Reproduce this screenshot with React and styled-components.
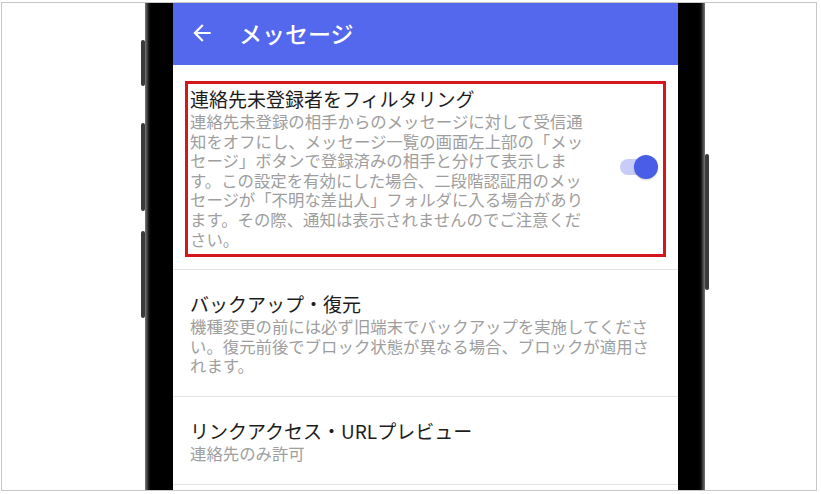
import React from "react";
import styled, { createGlobalStyle } from "styled-components";

const GlobalStyle = createGlobalStyle`
  html, body { margin: 0; padding: 0; background: #ffffff; }
  body { font-family: "Noto Sans CJK JP", "Noto Sans", sans-serif; }
  * { box-sizing: border-box; }
`;

const Page = styled.div`
  width: 821px;
  height: 494px;
  padding: 2px 0 0 1px;
  background: #ffffff;
`;

const Frame = styled.div`
  width: 816px;
  height: 489px;
  border: 1px solid #c8c8c8;
  overflow: hidden;
  display: flex;
  align-items: flex-start;
  padding-left: 143px;
`;

const Phone = styled.div`
  position: relative;
  width: 560px;
  height: 620px;
  padding: 0 27px 0 28px;
  background: linear-gradient(
    to right,
    #7a7a7a 0px,
    #111 4px,
    #000 6px,
    #000 calc(100% - 6px),
    #111 calc(100% - 4px),
    #7a7a7a 100%
  );
  flex-shrink: 0;
`;

const SideButton = styled.div`
  position: absolute;
  top: ${(p) => p.$top}px;
  height: ${(p) => p.$h}px;
  width: 4px;
  background: #3a3a3a;
  border-radius: 2px;
  ${(p) => (p.$right ? "right: -4px;" : "left: -4px;")}
`;

const Screen = styled.div`
  width: 505px;
  height: 100%;
  background: #ffffff;
  display: flex;
  flex-direction: column;
`;

const Header = styled.div`
  height: 62px;
  background: #5468ee;
  display: flex;
  align-items: center;
  padding: 0 0 2px 16px;
  gap: 24px;
  color: #ffffff;
`;

const BackIcon = styled.svg`
  width: 26px;
  height: 26px;
  fill: #ffffff;
  flex-shrink: 0;
`;

const HeaderTitle = styled.div`
  font-size: 23px;
  font-weight: 500;
  letter-spacing: 0;
  line-height: 30px;
`;

const Item = styled.div`
  position: relative;
  display: flex;
  align-items: center;
  padding: 20px 20px 20px 17px;
  border-bottom: 1px solid #e3e3e3;
  ${(p) =>
    p.$highlight &&
    `
    &::after {
      content: "";
      position: absolute;
      left: 12px;
      right: 12px;
      top: 16px;
      bottom: 12px;
      border: 3px solid #d4161d;
      pointer-events: none;
    }
  `}
`;

const TextCol = styled.div`
  flex: 1;
  min-width: 0;
`;

const Title = styled.div`
  font-size: 19px;
  line-height: 27px;
  color: #1c1c1c;
`;

const Desc = styled.div`
  font-size: 16.4px;
  line-height: 19.6px;
  color: #9e9e9e;
  line-break: strict;
  text-spacing-trim: space-all;
`;

const Toggle = styled.div`
  position: relative;
  width: 38px;
  height: 24px;
  margin-left: 30px;
  flex-shrink: 0;
`;

const Track = styled.div`
  position: absolute;
  left: 0;
  top: 4px;
  width: 31px;
  height: 16px;
  border-radius: 8px;
  background: ${(p) => (p.$on ? "#c7ccf8" : "#cccccc")};
`;

const Knob = styled.div`
  position: absolute;
  top: 0;
  ${(p) => (p.$on ? "right: 0;" : "left: 0;")}
  width: 24px;
  height: 24px;
  border-radius: 50%;
  background: ${(p) => (p.$on ? "#4a5de6" : "#f4f4f4")};
  box-shadow: 0 1px 2px rgba(0, 0, 0, 0.18);
`;

const settings = [
  {
    title: "連絡先未登録者をフィルタリング",
    desc:
      "連絡先未登録の相手からのメッセージに対して受信通知をオフにし、メッセージ一覧の画面左上部の「メッセージ」ボタンで登録済みの相手と分けて表示します。この設定を有効にした場合、二段階認証用のメッセージが「不明な差出人」フォルダに入る場合があります。その際、通知は表示されませんのでご注意ください。",
    toggle: true,
    highlight: true,
  },
  {
    title: "バックアップ・復元",
    desc:
      "機種変更の前には必ず旧端末でバックアップを実施してください。復元前後でブロック状態が異なる場合、ブロックが適用されます。",
  },
  {
    title: "リンクアクセス・URLプレビュー",
    desc: "連絡先のみ許可",
  },
];

export default function App() {
  return (
    <>
      <GlobalStyle />
      <Page>
        <Frame>
          <Phone>
            <SideButton $top={37} $h={46} />
            <SideButton $top={120} $h={88} />
            <SideButton $top={228} $h={87} />
            <SideButton $right $top={151} $h={136} />
            <Screen>
              <Header>
                <BackIcon viewBox="0 0 24 24">
                  <path d="M20 11H7.83l5.59-5.59L12 4l-8 8 8 8 1.41-1.41L7.83 13H20v-2z" />
                </BackIcon>
                <HeaderTitle>メッセージ</HeaderTitle>
              </Header>
              {settings.map((s) => (
                <Item key={s.title} $highlight={s.highlight}>
                  <TextCol>
                    <Title>{s.title}</Title>
                    <Desc>{s.desc}</Desc>
                  </TextCol>
                  {s.toggle && (
                    <Toggle>
                      <Track $on />
                      <Knob $on />
                    </Toggle>
                  )}
                </Item>
              ))}
            </Screen>
          </Phone>
        </Frame>
      </Page>
    </>
  );
}
